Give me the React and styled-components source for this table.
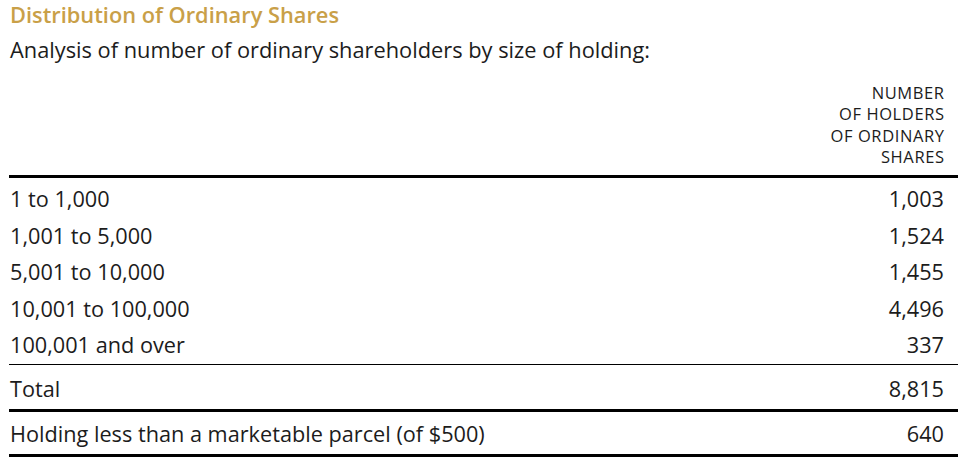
import React from 'react';
import styled, { createGlobalStyle, css } from 'styled-components';

const GlobalStyle = createGlobalStyle`
  body {
    margin: 0;
    background: #fff;
    font-family: "Open Sans", "Noto Sans", "Liberation Sans", sans-serif;
    color: #1c1c1c;
  }
`;

const Page = styled.div`
  width: 966px;
  height: 465px;
  box-sizing: border-box;
  padding: 3px 8px 0 9px;
  overflow: hidden;
`;

const Title = styled.h2`
  margin: 0 0 0 1px;
  font-size: 21.8px;
  line-height: 24px;
  font-weight: 600;
  color: #c9a048;
`;

const Subtitle = styled.p`
  margin: 10.5px 0 0 1px;
  font-size: 21.8px;
  line-height: 24px;
  font-weight: 400;
`;

const Table = styled.div`
  margin-top: 19.5px;
  display: flex;
  flex-direction: column;
`;

const HeaderRow = styled.div`
  display: flex;
  justify-content: flex-end;
  padding: 0.5px 14px 7.5px 0;
  border-bottom: 3px solid #000;
`;

const HeaderCell = styled.div`
  text-align: right;
  font-size: 16.5px;
  line-height: 21.6px;
  letter-spacing: 0.6px;
  margin-right: -0.6px;
  font-weight: 400;
  text-transform: uppercase;
`;

const Row = styled.div`
  display: grid;
  grid-template-columns: 1fr auto;
  padding: ${p => p.pad || '0'};
  padding-left: 1px;
  padding-right: 14px;
  font-size: 21.7px;
  line-height: ${p => p.lh || '36.5px'};
  ${p =>
    p.rule &&
    css`
      border-bottom: ${p.rule} solid #000;
    `};
`;

const Body = styled.div`
  padding: 3px 0 0.5px;
  border-bottom: 1px solid #000;
`;

const Value = styled.span`
  text-align: right;
`;

const bands = [
  ['1 to 1,000', '1,003'],
  ['1,001 to 5,000', '1,524'],
  ['5,001 to 10,000', '1,455'],
  ['10,001 to 100,000', '4,496'],
  ['100,001 and over', '337'],
];

export default function App() {
  return (
    <Page>
      <GlobalStyle />
      <Title>Distribution of Ordinary Shares</Title>
      <Subtitle>Analysis of number of ordinary shareholders by size of holding:</Subtitle>
      <Table>
        <HeaderRow>
          <HeaderCell>
            Number
            <br />
            of holders
            <br />
            of ordinary
            <br />
            shares
          </HeaderCell>
        </HeaderRow>
        <Body>
          {bands.map(([label, count]) => (
            <Row key={label}>
              <span>{label}</span>
              <Value>{count}</Value>
            </Row>
          ))}
        </Body>
        <Row pad="6px 0 1.5px" lh="36px" rule="3px">
          <span>Total</span>
          <Value>8,815</Value>
        </Row>
        <Row pad="4px 0 2px" lh="36px" rule="3px">
          <span>Holding less than a marketable parcel (of $500)</span>
          <Value>640</Value>
        </Row>
      </Table>
    </Page>
  );
}
